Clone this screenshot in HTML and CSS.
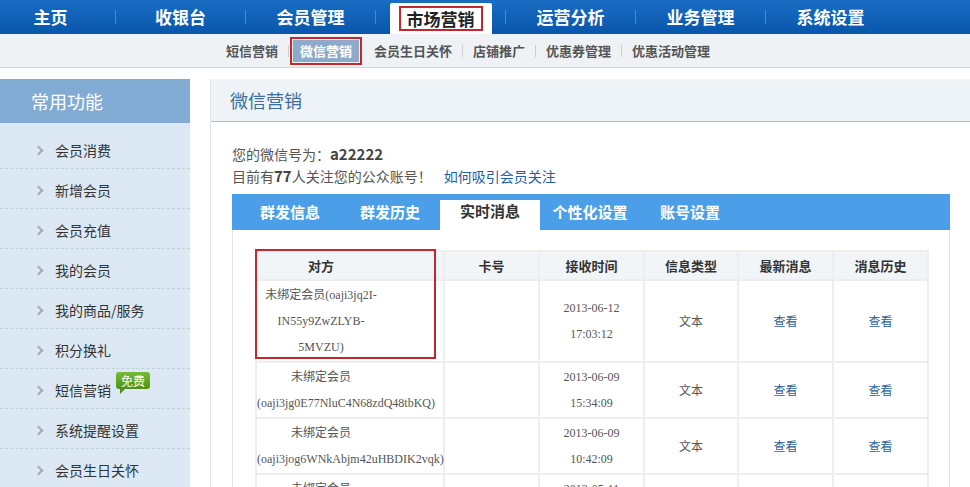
FILE: index.html
```html
<!DOCTYPE html>
<html lang="zh-CN">
<head>
    <meta charset="UTF-8">
    <meta name="viewport" content="width=device-width, initial-scale=1.0">
    <title>微信营销</title>
    <link rel="stylesheet" href="styles.css">
</head>
<body>
    <!-- 主菜单 -->
    <div class="topnav">
        <div class="mainmenu">
            <a class="menu-item" href="#">主页</a><span class="sep"></span>
            <a class="menu-item" href="#">收银台</a><span class="sep"></span>
            <a class="menu-item" href="#">会员管理</a><span class="sep"></span>
            <div class="menu-item active"><span class="tab"><span class="mark">市场营销</span></span></div><span class="sep"></span>
            <a class="menu-item" href="#">运营分析</a><span class="sep"></span>
            <a class="menu-item" href="#">业务管理</a><span class="sep"></span>
            <a class="menu-item" href="#">系统设置</a>
        </div>
    </div>

    <!-- 二级菜单 -->
    <div class="subnav">
        <a href="#">短信营销</a><span class="sep"></span>
        <a class="current" href="#"><span>微信营销</span></a>
        <a href="#">会员生日关怀</a><span class="sep"></span>
        <a href="#">店铺推广</a><span class="sep"></span>
        <a href="#">优惠券管理</a><span class="sep"></span>
        <a href="#">优惠活动管理</a>
    </div>

    <div class="layout">
        <!-- 左侧常用功能 -->
        <div class="sidebar">
            <div class="side-head">常用功能</div>
            <ul class="side-list">
                <li><a href="#">会员消费</a></li>
                <li><a href="#">新增会员</a></li>
                <li><a href="#">会员充值</a></li>
                <li><a href="#">我的会员</a></li>
                <li><a href="#">我的商品/服务</a></li>
                <li><a href="#">积分换礼</a></li>
                <li><a href="#">短信营销<span class="free">免费</span></a></li>
                <li><a href="#">系统提醒设置</a></li>
                <li><a href="#">会员生日关怀</a></li>
            </ul>
        </div>

        <!-- 主内容 -->
        <div class="main">
            <div class="main-head">微信营销</div>
            <div class="main-body">
                <div class="info">
                    <p>您的微信号为：<strong>a22222</strong></p>
                    <p>目前有<strong>77</strong>人关注您的公众账号！<a class="help" href="#">如何吸引会员关注</a></p>
                </div>

                <div class="box">
                    <div class="tabs">
                        <a href="#">群发信息</a>
                        <a href="#">群发历史</a>
                        <a class="on" href="#">实时消息</a>
                        <a href="#">个性化设置</a>
                        <a href="#">账号设置</a>
                    </div>

                    <div class="grid-wrap">
                        <table class="grid">
                            <colgroup>
                                <col class="c-who">
                                <col class="c-card">
                                <col class="c-time">
                                <col class="c-type">
                                <col class="c-new">
                                <col class="c-hist">
                            </colgroup>
                            <tr>
                                <th class="who">对方</th>
                                <th>卡号</th>
                                <th>接收时间</th>
                                <th>信息类型</th>
                                <th>最新消息</th>
                                <th>消息历史</th>
                            </tr>
                            <tr>
                                <td class="who">未绑定会员(oaji3jq2I-IN55y9ZwZLYB-5MVZU)</td>
                                <td></td>
                                <td>2013-06-12<br>17:03:12</td>
                                <td class="cn">文本</td>
                                <td class="cn"><a href="#">查看</a></td>
                                <td class="cn"><a href="#">查看</a></td>
                            </tr>
                            <tr>
                                <td class="who">未绑定会员(oaji3jg0E77NluC4N68zdQ48tbKQ)</td>
                                <td></td>
                                <td>2013-06-09<br>15:34:09</td>
                                <td class="cn">文本</td>
                                <td class="cn"><a href="#">查看</a></td>
                                <td class="cn"><a href="#">查看</a></td>
                            </tr>
                            <tr>
                                <td class="who">未绑定会员(oaji3jog6WNkAbjm42uHBDIK2vqk)</td>
                                <td></td>
                                <td>2013-06-09<br>10:42:09</td>
                                <td class="cn">文本</td>
                                <td class="cn"><a href="#">查看</a></td>
                                <td class="cn"><a href="#">查看</a></td>
                            </tr>
                            <tr>
                                <td class="who">未绑定会员(oaji3jr8KpT2mQ71xLcV9dWe5sHn)</td>
                                <td></td>
                                <td>2013-05-11<br>09:15:40</td>
                                <td class="cn">文本</td>
                                <td class="cn"><a href="#">查看</a></td>
                                <td class="cn"><a href="#">查看</a></td>
                            </tr>
                        </table>
                        <div class="mark-box"></div>
                    </div>
                </div>
            </div>
        </div>
    </div>
</body>
</html>
```

FILE: styles.css
```css
body {
    margin: 0;
    overflow: hidden;
    background: #fff;
    font-family: "Noto Sans CJK SC", sans-serif;
    color: #555;
}

a {
    text-decoration: none;
}

ul {
    margin: 0;
    padding: 0;
    list-style: none;
}

/* 主菜单 */
.topnav {
    height: 34px;
    background: linear-gradient(#1a6dc3, #0856ab);
}

.mainmenu {
    display: flex;
    align-items: center;
    height: 100%;
    margin-left: -14px;
}

.menu-item {
    width: 129px;
    text-align: center;
    color: #fff;
    font-size: 17px;
    font-weight: bold;
    line-height: 34px;
}

.mainmenu .sep {
    width: 1px;
    height: 14px;
    background: #4f88c9;
}

.menu-item.active {
    align-self: flex-end;
    display: flex;
    justify-content: center;
    line-height: normal;
}

.menu-item .tab {
    height: 31px;
    padding: 3px 9px 0;
    box-sizing: border-box;
    background: #fff;
    border-radius: 2px 2px 0 0;
}

.menu-item .mark {
    display: block;
    border: 2px solid #c4262e;
    padding: 0 6px;
    line-height: 21px;
    color: #222;
}

/* 二级菜单 */
.subnav {
    display: flex;
    align-items: center;
    height: 33px;
    padding-left: 216px;
    background: #eef2f5;
    border-bottom: 1px solid #cfd6dd;
    font-size: 13px;
    font-weight: bold;
}

.subnav a {
    color: #555;
    padding: 0 10px;
}

.subnav .sep {
    width: 1px;
    height: 12px;
    background: #c9ced3;
}

.subnav a.current {
    margin: 0 2px 0 1px;
    padding: 1px;
    border: 2px solid #c4262e;
}

.subnav a.current span {
    display: block;
    padding: 0 7px;
    line-height: 22px;
    background: #8eaacb;
    color: #fff;
}

/* 布局 */
.layout {
    display: flex;
    margin-top: 11px;
}

.sidebar {
    width: 190px;
    flex-shrink: 0;
}

.side-head {
    height: 44px;
    line-height: 44px;
    padding-left: 31px;
    background: #82abd4;
    color: #fff;
    font-size: 18px;
}

.side-list {
    padding-top: 6px;
    background: #dce9f4;
}

.side-list li {
    border-bottom: 1px dashed #c3d0dc;
}

.side-list a {
    display: flex;
    align-items: center;
    height: 39px;
    padding: 3px 0 0 35px;
    box-sizing: border-box;
    color: #333;
    font-size: 14px;
}

.side-list a::before {
    content: "";
    display: inline-block;
    width: 5px;
    height: 5px;
    margin-right: 13px;
    border-top: 2px solid #a3abb3;
    border-right: 2px solid #a3abb3;
    transform: rotate(45deg);
}

/* 免费标签 */
.free {
    position: relative;
    top: -10px;
    margin-left: 5px;
    padding: 0 5px;
    line-height: 17px;
    font-size: 12px;
    color: #fff;
    background: linear-gradient(#76bb35, #4d9218);
    border-radius: 3px;
}

.free::after {
    content: "";
    position: absolute;
    left: 4px;
    bottom: -5px;
    border-right: 5px solid transparent;
    border-top: 5px solid #4d9218;
}

/* 主内容 */
.main {
    flex: 1;
    margin-left: 20px;
    border-left: 1px solid #e1e6eb;
}

.main-head {
    height: 42px;
    line-height: 42px;
    padding-left: 19px;
    background: #eef3f8;
    border-bottom: 1px solid #a9bdd1;
    color: #3d6d9c;
    font-size: 18px;
}

.main-body {
    padding: 21px 22px 0 21px;
}

.info p {
    margin: 0;
    line-height: 21px;
    font-size: 14px;
    color: #555;
}

.info strong {
    font-size: 15px;
    color: #444;
}

.info .help {
    margin-left: 12px;
    color: #1f5fa6;
}

.box {
    margin-top: 7px;
    border: 1px solid #e4e4e4;
    border-top: none;
    height: 300px;
}

.tabs {
    display: flex;
    height: 36px;
    margin: 0 -1px;
    padding-left: 8px;
    background: #4b9fe8;
}

.tabs a {
    width: 100px;
    text-align: center;
    color: #fff;
    font-size: 15px;
    font-weight: bold;
    line-height: 36px;
}

.tabs a.on {
    margin-top: 6px;
    padding-bottom: 8px;
    line-height: 22px;
    background: #fff;
    color: #333;
}

/* 消息表格 */
.grid-wrap {
    position: relative;
    padding: 20px 20px 0 22px;
}

.grid {
    width: 672px;
    table-layout: fixed;
    border-collapse: collapse;
}

.c-who { width: 188px; }
.c-card { width: 95px; }
.c-time { width: 105px; }
.c-type { width: 94px; }
.c-new { width: 95px; }
.c-hist { width: 95px; }

.grid th,
.grid td {
    border: 2px solid #eeeeee;
    text-align: center;
}

.grid th {
    height: 27px;
    padding: 0;
    background: #f1f5f8;
    color: #333;
    font-size: 13px;
}

.grid td {
    padding: 1px 0;
    font-family: "Liberation Serif", "Noto Sans CJK SC", serif;
    font-size: 12px;
    line-height: 26px;
    color: #555;
}

.grid .who {
    padding-right: 58px;
}

.grid td.cn {
    font-family: "Noto Sans CJK SC", sans-serif;
}

.grid td a {
    color: #2d6198;
}

/* 红色标注框 */
.mark-box {
    position: absolute;
    left: 22px;
    top: 19px;
    width: 181px;
    height: 110px;
    border: 2px solid #c4262e;
    box-sizing: border-box;
}
```
